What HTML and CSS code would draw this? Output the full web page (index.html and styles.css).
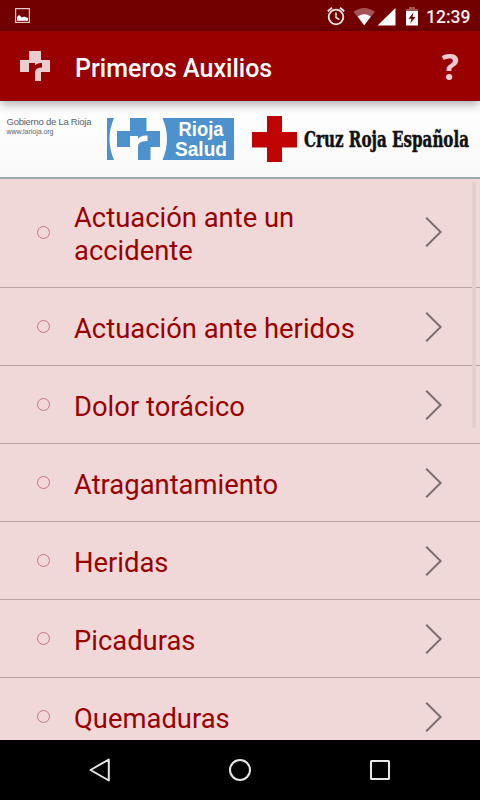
FILE: index.html
```html
<!DOCTYPE html>
<html lang="es">
<head>
    <meta charset="UTF-8" />
    <meta name="viewport" content="width=device-width, initial-scale=1.0" />
    <title>Primeros Auxilios</title>
    <link rel="stylesheet" href="styles.css">
</head>
<body>
    <svg class="defs" width="0" height="0">
        <symbol id="chevron" viewBox="0 0 18 32">
            <path d="M1.200 1.800 15.600 16 1.200 30.200" fill="none" stroke="#7d6e6e" stroke-width="2" />
        </symbol>
    </svg>

    <div class="status-bar">
        <svg class="icon-picture" width="15" height="15" viewBox="0 0 15 15">
            <rect x=".6" y=".6" width="13.800" height="13.800" fill="none" stroke="#e0c8c8" stroke-width="1.200" />
            <path d="M2 12.800V9l2-2 3 2.500 2-1 4 1.500v2.800z" fill="#fff" />
        </svg>
        <svg class="status-icons" width="92" height="20" viewBox="0 0 92 20">
            <g fill="none" stroke="#f6e8e8">
                <circle cx="9" cy="11" r="7.300" stroke-width="1.800" />
                <path d="M9 6.500v5l3.400 2.200" stroke-width="1.500" />
                <path d="M.8 5.200 5 1.700M17.200 5.200 13 1.700" stroke-width="1.800" />
            </g>
            <path d="M26.500 5.800Q37.200-1.800 48 5.800L37.200 19.300z" fill="#a45454" />
            <path d="M30.700 10.500Q37.200 6 43.800 10.500L37.200 19.300z" fill="#fff" />
            <path d="M68.500 2v17.500H50.500z" fill="#fff" />
            <path d="M82 1h6v2h3v3H79V3h3z" fill="#a45454" />
            <path d="M79 5h12v14.500H79z" fill="#fff" />
            <path d="M86.500 6.500 81.500 12.800h3l-1.300 4.700 5.300-6.500h-3z" fill="#730000" />
        </svg>
        <span class="clock">12:39</span>
    </div>

    <header class="app-bar">
        <svg width="30" height="30" viewBox="0 0 30 30">
            <path d="M9 0h12v9h9v12h-9v9h-6V21H0V9h9z" fill="#edcccf" />
            <path d="M9 12h6v2.500q2-2.800 7-2.500v4.500q-6.500 0-7 4.500H9z" fill="#990000" />
        </svg>
        <h1>Primeros Auxilios</h1>
        <span class="help">?</span>
    </header>

    <div class="banner">
        <svg width="480" height="76" viewBox="0 0 480 76">
            <g class="government">
                <text x="6.500" y="23.500" font-size="9.500" textLength="85">Gobierno de La Rioja</text>
                <text x="6.500" y="33" font-size="7" textLength="47">www.larioja.org</text>
            </g>
            <!-- Rioja Salud -->
            <g fill="#4d92cc">
                <path d="M107 17h7q-9 21 0 42h-7z" />
                <path d="M162.500 17H234v42h-71.500q9-21 0-42z" />
                <path d="M130 17h16.500v13H160v16h-9.500v13H138V46h-21V30h13z" />
            </g>
            <path d="M130 35h8v3q2.500-4 9.500-3.500V40q-7 0-9 3-.5 1-.5 3.500h-8z" fill="#fdfdfd" />
            <g class="salud">
                <text x="178.500" y="35" textLength="45" lengthAdjust="spacingAndGlyphs">Rioja</text>
                <text x="175" y="55" textLength="52" lengthAdjust="spacingAndGlyphs">Salud</text>
            </g>
            <path d="M267 15h15v16h15v15.500h-15V61h-15V46.500h-15V31h15z" fill="#c00404" />
            <text class="cruz-roja" x="304" y="46" textLength="165" lengthAdjust="spacingAndGlyphs">Cruz Roja Española</text>
        </svg>
    </div>

    <main>
        <ul class="topics">
            <li class="tall"><i class="bullet"></i><span>Actuación ante un accidente</span><svg class="chevron"><use href="#chevron" /></svg></li>
            <li><i class="bullet"></i><span>Actuación ante heridos</span><svg class="chevron"><use href="#chevron" /></svg></li>
            <li><i class="bullet"></i><span>Dolor torácico</span><svg class="chevron"><use href="#chevron" /></svg></li>
            <li><i class="bullet"></i><span>Atragantamiento</span><svg class="chevron"><use href="#chevron" /></svg></li>
            <li><i class="bullet"></i><span>Heridas</span><svg class="chevron"><use href="#chevron" /></svg></li>
            <li><i class="bullet"></i><span>Picaduras</span><svg class="chevron"><use href="#chevron" /></svg></li>
            <li><i class="bullet"></i><span>Quemaduras</span><svg class="chevron"><use href="#chevron" /></svg></li>
        </ul>
        <div class="scrollbar"></div>
    </main>

    <nav class="nav-bar">
        <svg width="24" height="26" viewBox="0 0 24 26">
            <path d="M20.800 2.500v21L2.500 13z" fill="none" stroke="#e6e6e6" stroke-width="2" stroke-linejoin="round" />
        </svg>
        <svg width="24" height="26" viewBox="0 0 24 26">
            <circle cx="12" cy="13" r="10" fill="none" stroke="#e6e6e6" stroke-width="2" />
        </svg>
        <svg width="24" height="26" viewBox="0 0 24 26">
            <rect x="3" y="4" width="18" height="18" rx=".5" fill="none" stroke="#e6e6e6" stroke-width="2" />
        </svg>
    </nav>
</body>
</html>
```
FILE: styles.css
```css
* { box-sizing: border-box; }
body {
    margin: 0;
    width: 480px;
    height: 800px;
    display: flex;
    flex-direction: column;
    overflow: hidden;
    font-family: Roboto, sans-serif;
    background: #f0d8d8;
}
svg { display: block; flex: none; }
.defs { display: none; }

.status-bar {
    flex: none;
    height: 31px;
    display: flex;
    align-items: center;
    padding: 0 10px 0 15px;
    background: #730000;
    color: #f8eeee;
}
.status-icons { margin-left: auto; }
.clock {
    width: 44px;
    margin-left: 7px;
    padding-top: 2px;
    font-size: 17.5px;
    font-weight: 500;
    white-space: nowrap;
}

.app-bar {
    flex: none;
    height: 70px;
    display: flex;
    align-items: center;
    padding: 0 21px 0 20px;
    background: #990000;
    z-index: 1;
    box-shadow: 0 3px 10px rgba(0, 0, 0, 0.35);
}
.app-bar h1 {
    margin: 4px 0 0 25px;
    font-size: 25px;
    font-weight: 500;
    color: #fff;
}
.help {
    margin: 2px 0 0 auto;
    font-family: "Open Sans", sans-serif;
    font-size: 36px;
    font-weight: 700;
    line-height: 40px;
    color: #edcccf;
}

.banner {
    flex: none;
    height: 78px;
    background: linear-gradient(#fff, #f9f9f9);
    border-bottom: 2px solid #9ca8b0;
}
.government {
    font-family: "Liberation Sans", sans-serif;
    fill: #59626a;
}
.salud {
    font-family: "Liberation Sans", sans-serif;
    font-size: 19.5px;
    font-weight: 700;
    fill: #fff;
}
.cruz-roja {
    font-family: "DejaVu Serif Condensed", "DejaVu Serif", serif;
    font-size: 23px;
    font-weight: 700;
    fill: #111;
    stroke: #111;
    stroke-width: 0.5px;
}

main {
    position: relative;
    flex: 1;
    overflow: hidden;
}
.topics {
    margin: 0;
    padding: 0;
    list-style: none;
}
.topics li {
    height: 78px;
    display: flex;
    align-items: center;
    padding: 0 37px;
    border-bottom: 1px solid #b8a0a0;
    font-size: 27.4px;
    line-height: 33px;
    color: #990000;
}
.topics .tall {
    height: 109px;
    padding-bottom: 2px;
}
.topics span {
    width: 300px;
    margin-left: 24px;
    padding-top: 5px;
}
.bullet {
    width: 13px;
    height: 13px;
    border: 1px solid #c9757c;
    border-radius: 50%;
}
.chevron {
    width: 18px;
    height: 32px;
    margin-left: auto;
}
/* lies over the list */
.scrollbar {
    position: absolute;
    top: 3px;
    right: 4px;
    width: 4px;
    height: 246px;
    background: #e4cfcf;
}

.nav-bar {
    flex: none;
    height: 60px;
    display: flex;
    justify-content: center;
    align-items: center;
    gap: 116px;
    background: #000;
}
```
